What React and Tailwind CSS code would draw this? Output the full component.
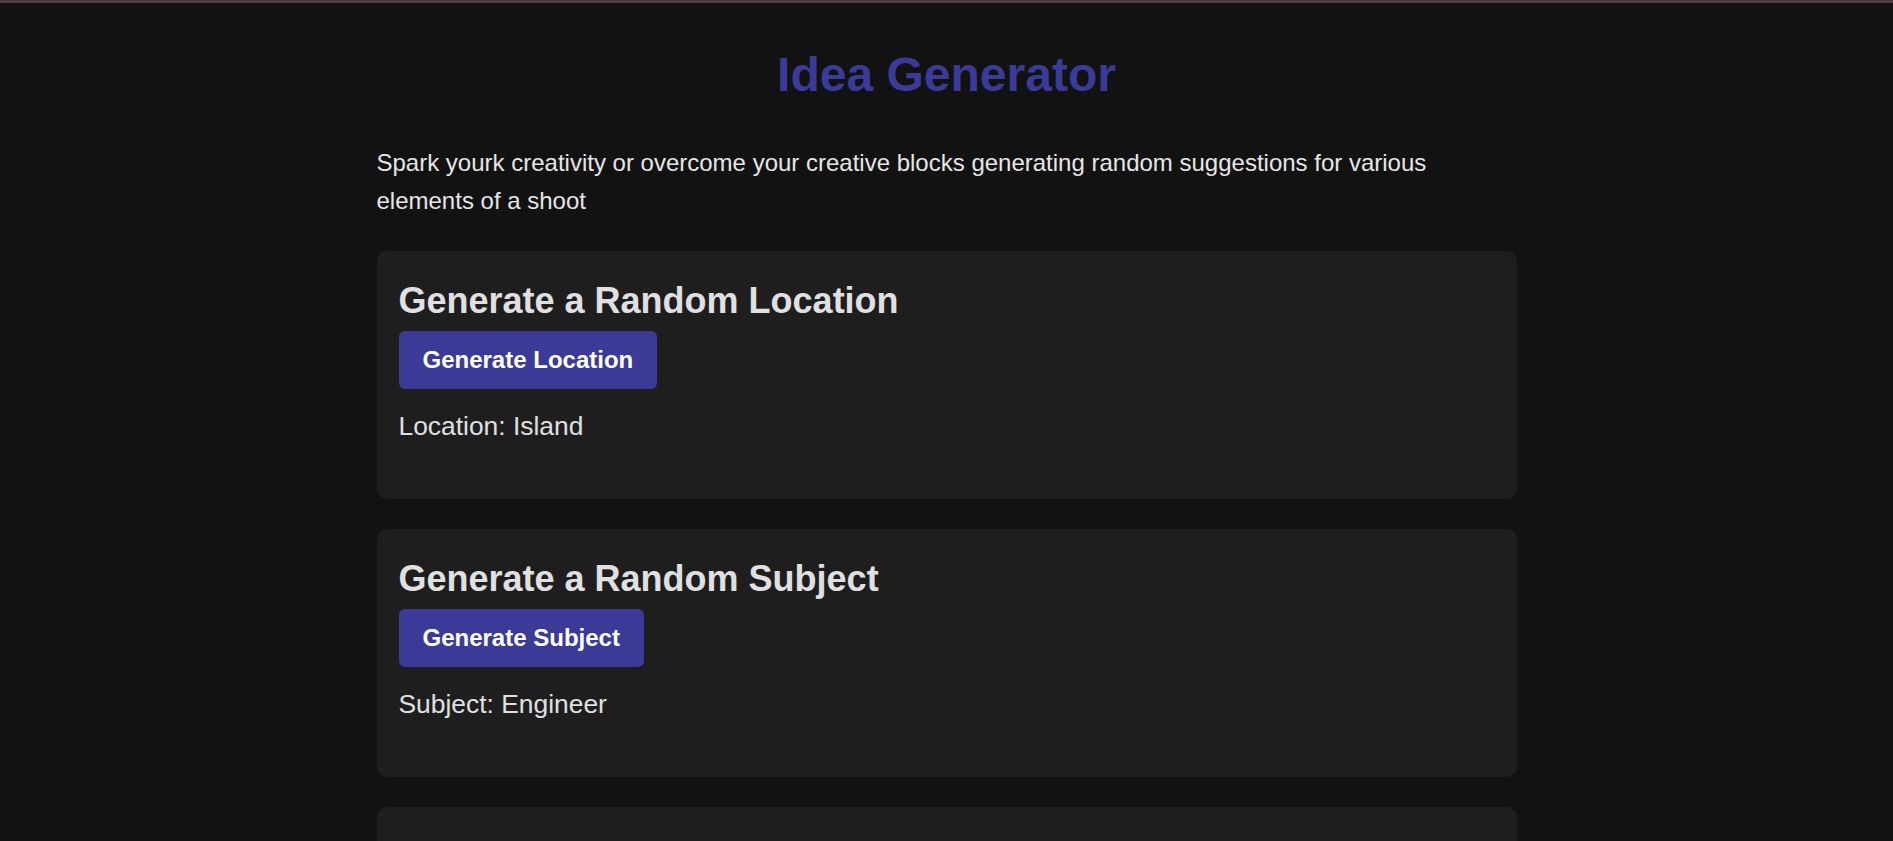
const sections = [
  { title: 'Generate a Random Location', button: 'Generate Location', label: 'Location', value: 'Island' },
  { title: 'Generate a Random Subject', button: 'Generate Subject', label: 'Subject', value: 'Engineer' },
  { title: 'Generate a Random Mood', button: 'Generate Mood', label: 'Mood', value: 'Calm' },
];

function GeneratorCard({ title, button, label, value }) {
  return (
    <div className="bg-[#1e1e1e] rounded-[10px] px-[22px] pt-[29px] h-[248px] shrink-0">
      <h2 className="text-[36px] leading-[42px] font-bold text-[#e0e0e0]">{title}</h2>
      <button className="mt-[9px] h-[58px] px-6 rounded-[6px] bg-[#3b3b97] text-white text-[24px] font-bold">
        {button}
      </button>
      <p className="mt-[22px] text-[26.4px] leading-[30px] text-[#e0e0e0]">
        {label}: {value}
      </p>
    </div>
  );
}

export default function App() {
  return (
    <div className="min-h-screen h-[841px] overflow-hidden bg-[#121212] font-['Liberation_Sans',Arial,sans-serif]">
      <div className="h-[3px] bg-[#4d3a45]" />
      <div className="w-[1140px] mx-auto flex flex-col">
        <h1 className="mt-[44px] text-[48px] leading-[55px] font-bold text-center text-[#3a3a98]">
          Idea Generator
        </h1>
        <p className="mt-[42px] text-[24px] leading-[38.4px] text-[#e6e6e6]">
          Spark yourk creativity or overcome your creative blocks generating random suggestions for various elements of a shoot
        </p>
        <div className="mt-[30px] flex flex-col gap-[30px]">
          {sections.map((s) => (
            <GeneratorCard key={s.label} {...s} />
          ))}
        </div>
      </div>
    </div>
  );
}
